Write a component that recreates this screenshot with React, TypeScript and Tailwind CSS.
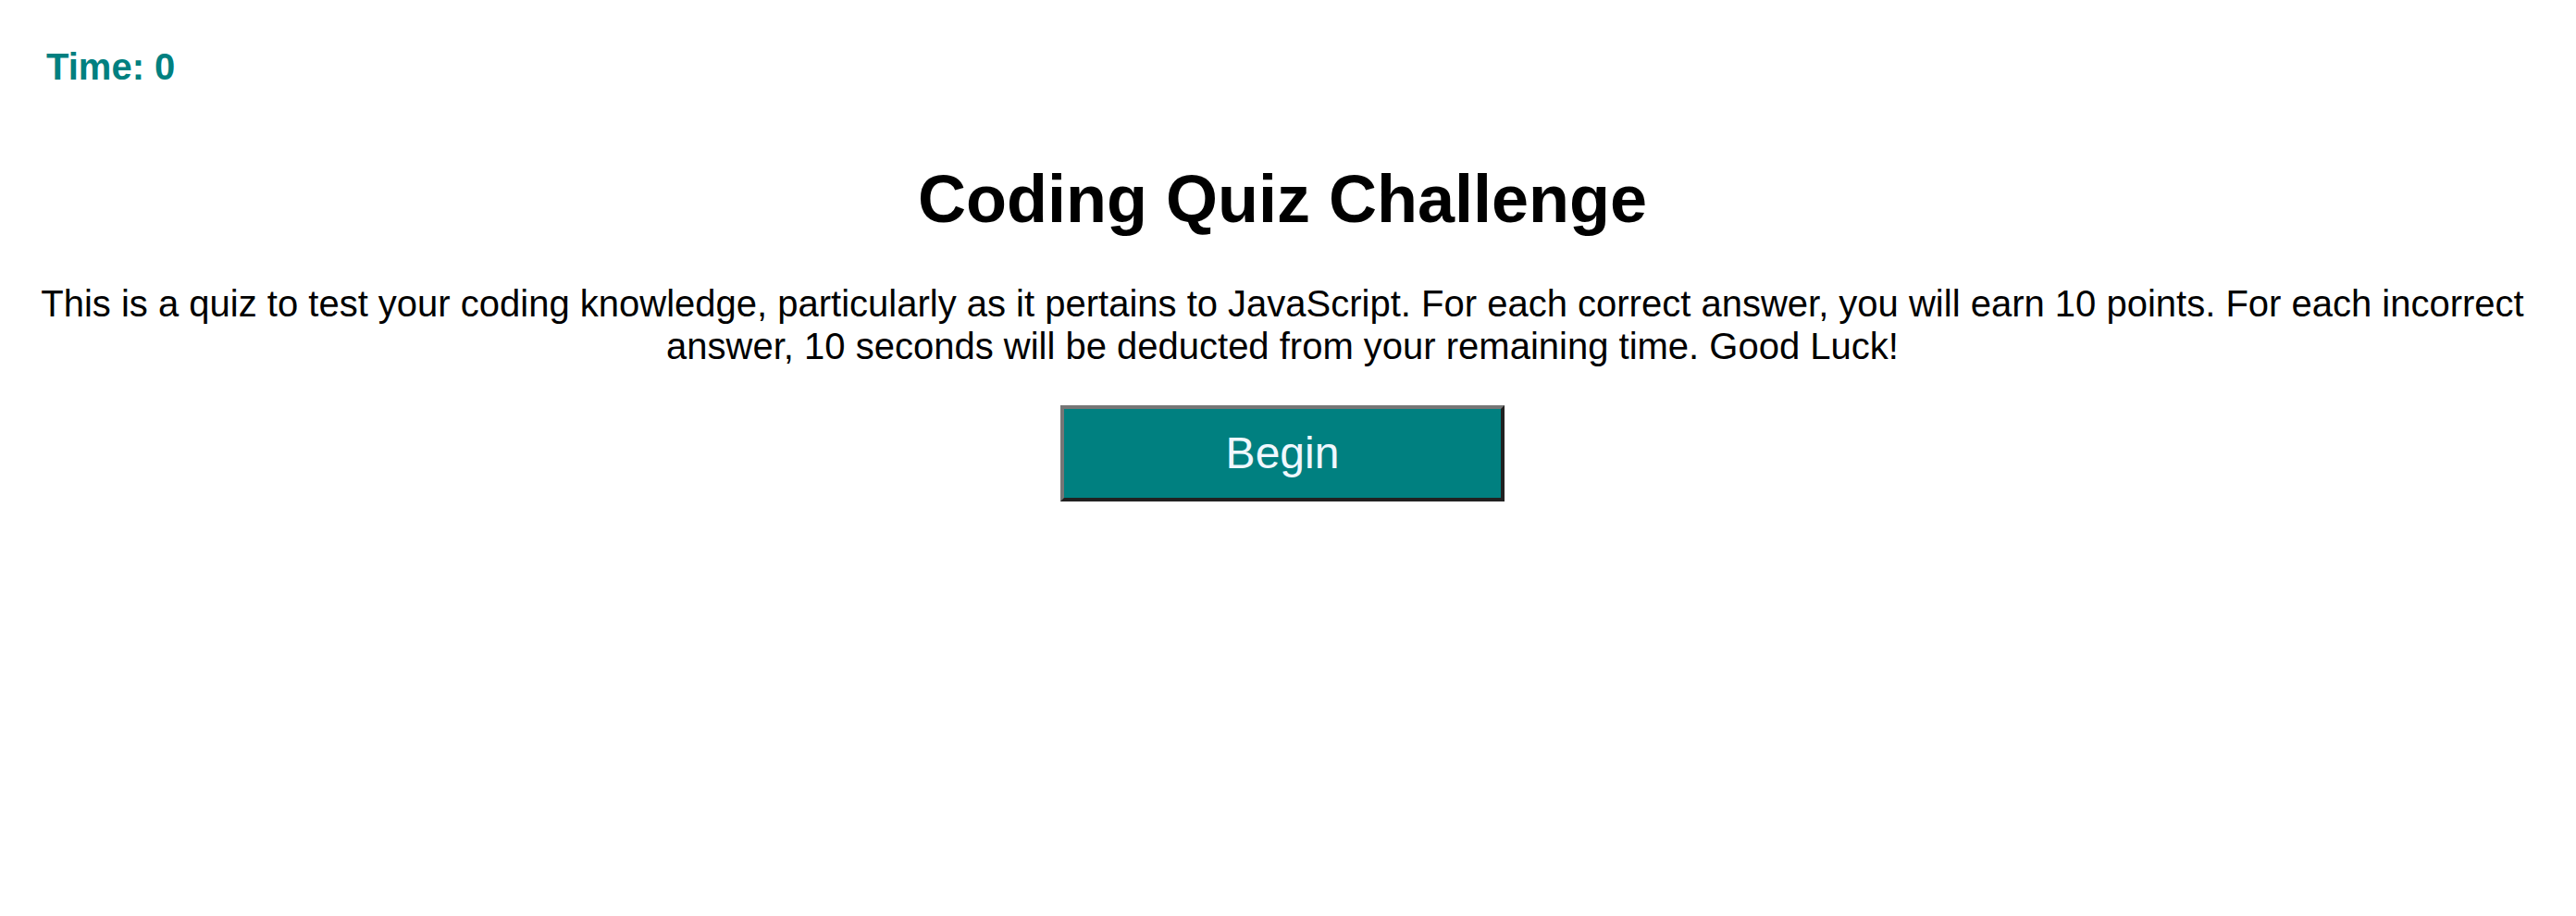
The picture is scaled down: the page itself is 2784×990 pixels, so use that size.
export default function App() {
  return (
    <div className="min-h-screen bg-white px-4 pt-12 font-['Liberation_Sans',Arial,sans-serif] text-black">
      <header className="px-[34px]">
        <p className="text-[40px] leading-[48px] font-bold text-[#008080]">Time: 0</p>
      </header>
      <main className="flex flex-col items-center pr-3 text-center">
        <h1 className="mt-[76px] text-[72px] leading-[86px] font-bold">Coding Quiz Challenge</h1>
        <p className="mt-[47px] text-[40px] leading-[46px]">
          This is a quiz to test your coding knowledge, particularly as it pertains to JavaScript. For each correct answer, you will earn 10 points. For each incorrect answer, 10 seconds will be deducted from your remaining time. Good Luck!
        </p>
        <button type="button" className="mt-[41px] h-[104px] w-[480px] border-4 border-t-[#767676] border-l-[#767676] border-r-[#212121] border-b-[#212121] bg-[#008080] text-[48px] leading-[56px] text-[#f0f8ff]">
          Begin
        </button>
      </main>
    </div>
  );
}
